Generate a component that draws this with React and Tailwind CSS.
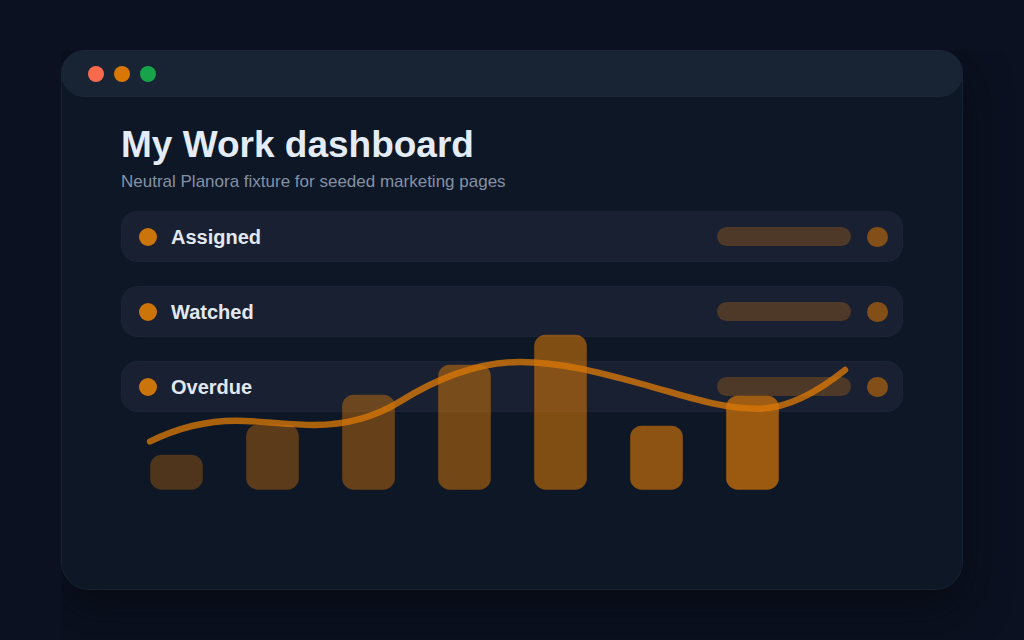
import React from "react";

const items = ["Assigned", "Watched", "Overdue"];

const bars = [
  { height: 35, opacity: 0.32 },
  { height: 65, opacity: 0.38 },
  { height: 95, opacity: 0.44 },
  { height: 125, opacity: 0.5 },
  { height: 155, opacity: 0.57 },
  { height: 64, opacity: 0.63 },
  { height: 94, opacity: 0.7 },
];

function TitleBar() {
  return (
    <div className="-mx-px -mt-px flex h-[47px] items-center gap-2.5 rounded-3xl border border-[#1b2738] bg-[#182334] pl-[26px]">
      <span className="size-4 rounded-full bg-[#f96a4c]" />
      <span className="size-4 rounded-full bg-[#d97706]" />
      <span className="size-4 rounded-full bg-[#16a34a]" />
    </div>
  );
}

function WorkItem({ label }) {
  return (
    <li className="flex h-[51px] items-center rounded-2xl border border-[#1a2436] bg-[#182032] pr-3.5 pl-[17px]">
      <span className="size-[18px] rounded-full bg-[#cb740a]" />
      <span className="ml-3.5 text-[20px] leading-6 font-bold text-[#e2e8f0]">
        {label}
      </span>
      <span className="ml-auto h-[19px] w-[134px] rounded-full bg-[#4e3828]" />
      <span className="ml-4 h-5 w-[21px] rounded-full bg-[#834f18]" />
    </li>
  );
}

function Chart() {
  return (
    <svg
      className="pointer-events-none absolute inset-x-0 top-[119px] w-full"
      viewBox="0 0 782 170"
      aria-hidden="true"
    >
      {bars.map((bar, i) => (
        <rect
          key={i}
          x={29.2 + i * 96}
          y={159.7 - bar.height}
          width="52.6"
          height={bar.height}
          rx="11.5"
          fill="#d97706"
          opacity={bar.opacity}
        />
      ))}
      <path
        d="M29 111.5C57.7 97.2 86.3 90.7 115 90.7C141 90.7 167 95 193 95C221.7 95 250.3 89.3 279 71.5C319 46.7 359 32 399 32C439 32 479 42.7 519 53.5C558.3 64.1 597.7 78.7 637 78.7C666 78.7 695 63.2 724 40"
        fill="none"
        stroke="#d97706"
        strokeWidth="6.4"
        strokeLinecap="round"
        opacity="0.78"
      />
    </svg>
  );
}

export default function App() {
  return (
    <main className="flex min-h-screen bg-[#0b1120] px-[61px] py-[50px] font-['Liberation_Sans',Arial,sans-serif]">
      <section className="flex-1 rounded-[28px] border border-[#172232] bg-[#0d1726] shadow-[0_18px_45px_rgba(5,10,16,0.75)] [clip-path:inset(0_-61px_-50px_0)]">
        <TitleBar />
        <div className="px-[59px] pt-[27px]">
          <h1 className="text-[37px] leading-[42px] font-bold text-[#e4edf7]">
            My Work dashboard
          </h1>
          <p className="mt-1 text-[17px] leading-6 text-[#8491a5]">
            Neutral Planora fixture for seeded marketing pages
          </p>
          <div className="relative mt-[17px]">
            <ul className="flex flex-col gap-6">
              {items.map((label) => (
                <WorkItem key={label} label={label} />
              ))}
            </ul>
            <Chart />
          </div>
        </div>
      </section>
    </main>
  );
}
